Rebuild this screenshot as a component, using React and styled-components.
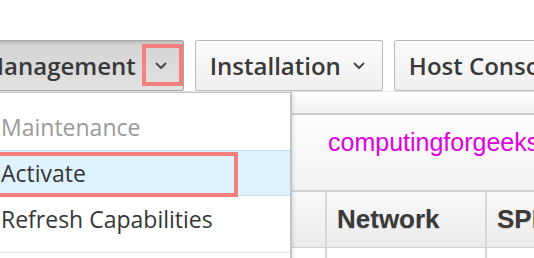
import React from 'react';
import styled, { createGlobalStyle } from 'styled-components';

const GlobalStyle = createGlobalStyle`
  html, body {
    margin: 0;
    padding: 0;
    background: #fff;
    overflow: hidden;
  }
  body {
    font-family: "Open Sans", "Liberation Sans", sans-serif;
    color: #363636;
  }
  *, *::before, *::after {
    box-sizing: border-box;
  }
`;

const Page = styled.div`
  margin-left: -33px;
  padding-top: 40px;
  width: 640px;
`;

const Toolbar = styled.div`
  position: relative;
  display: flex;
  gap: 11px;
  height: 51px;
`;

const ToolButton = styled.button`
  position: relative;
  display: flex;
  align-items: center;
  gap: ${p => (p.$active ? '19px' : '12px')};
  height: 51px;
  padding: 0 ${p => (p.$active ? '16px' : '17px')} 0 14px;
  border: 1px solid ${p => (p.$active ? '#a8a8a8' : '#bbbbbb')};
  border-radius: 2px;
  background: ${p =>
    p.$active
      ? 'linear-gradient(#d3d3d3, #e2e2e2)'
      : 'linear-gradient(#fbfbfb, #efefef)'};
  box-shadow: ${p => (p.$active ? 'inset 0 2px 3px rgba(0,0,0,0.12)' : 'none')};
  font-family: "Open Sans", sans-serif;
  font-size: 24px;
  font-weight: 600;
  color: #393939;
  white-space: nowrap;
  flex-shrink: 0;
`;

const Caret = styled.span`
  position: relative;
  display: inline-flex;
  align-items: center;
  justify-content: center;
  width: 12px;
  height: 12px;
`;

const Highlight = styled.span`
  position: absolute;
  border: 4px solid #f4807e;
  pointer-events: none;
`;

const CaretBox = styled(Highlight)`
  left: -13px;
  right: -16px;
  top: -16px;
  bottom: -14px;
`;

const Menu = styled.ul`
  position: absolute;
  left: 0;
  top: 52px;
  z-index: 5;
  width: 325px;
  height: 200px;
  margin: 0;
  padding: 11px 0 0;
  list-style: none;
  background: #fff;
  border: 1px solid #c4c4c4;
  border-right-width: 2px;
  box-shadow: 1px 2px 4px rgba(0,0,0,0.12);
`;

const MenuItem = styled.li`
  position: relative;
  display: flex;
  align-items: center;
  height: 46px;
  padding-left: 33px;
  font-size: 23px;
  color: ${p => (p.$disabled ? '#9a9a9a' : '#363636')};
  background: ${p => (p.$selected ? '#def3ff' : 'transparent')};
  border-top: 1px solid ${p => (p.$selected ? '#bde0f3' : 'transparent')};
  border-bottom: 1px solid ${p => (p.$selected ? '#bde0f3' : 'transparent')};
`;

const RowBox = styled(Highlight)`
  left: 20px;
  width: 250px;
  top: 1px;
  bottom: -2px;
`;

const Divider = styled.li`
  height: 1px;
  margin-top: 10px;
  background: #e3e3e3;
`;

const Panel = styled.div`
  display: flex;
  flex-direction: column;
`;

const TopStrip = styled.div`
  height: 24px;
  background: linear-gradient(#ffffff, #f1f1f1);
  border-top: 1px solid #e6e6e6;
  border-bottom: 2px solid #cdcdcd;
`;

const Header = styled.div`
  display: flex;
  align-items: center;
  height: 77px;
  padding-left: 361px;
  padding-bottom: 20px;
  background: linear-gradient(#fdfdfd, #f2f2f2);
  border-bottom: 2px solid #d2d2d2;
`;

const Brand = styled.span`
  font-family: "Liberation Sans", Arial, sans-serif;
  font-size: 25px;
  color: #e000e0;
`;

const TableRow = styled.div`
  display: grid;
  grid-template-columns: 360px 160px 1fr;
  height: ${p => (p.$head ? '56px' : '40px')};
  background: ${p => (p.$head ? 'linear-gradient(#f9f9f9, #ebebeb)' : '#fff')};
  border-bottom: 1px solid #d0d0d0;
`;

const Cell = styled.div`
  display: flex;
  align-items: center;
  padding-left: 10px;
  border-right: 2px solid #d6d6d6;
  font-family: "Liberation Sans", Arial, sans-serif;
  font-size: 26px;
  font-weight: 700;
  color: #3a3a3a;
  text-shadow: 0 1px 1px rgba(0,0,0,0.15);
  white-space: nowrap;
  overflow: hidden;
`;

const Chevron = () => (
  <svg width="12" height="8" viewBox="0 0 12 8">
    <polyline points="1.5,1.5 6,6 10.5,1.5" fill="none" stroke="#444" strokeWidth="1.8" strokeLinecap="round" strokeLinejoin="round" />
  </svg>
);

const App = () => {
  return (
    <>
      <GlobalStyle />
      <Page>
        <Toolbar>
          <ToolButton $active>
            Management
            <Caret>
              <Chevron />
              <CaretBox />
            </Caret>
          </ToolButton>
          <ToolButton>
            Installation
            <Caret>
              <Chevron />
            </Caret>
          </ToolButton>
          <ToolButton>Host Console</ToolButton>

          <Menu>
            <MenuItem $disabled>Maintenance</MenuItem>
            <MenuItem $selected>
              Activate
              <RowBox />
            </MenuItem>
            <MenuItem>Refresh Capabilities</MenuItem>
            <Divider />
          </Menu>
        </Toolbar>

        <Panel>
          <TopStrip />
          <Header>
            <Brand>computingforgeeks</Brand>
          </Header>
          <TableRow $head>
            <Cell />
            <Cell>Network</Cell>
            <Cell>SPM</Cell>
          </TableRow>
          <TableRow>
            <Cell />
            <Cell />
            <Cell />
          </TableRow>
        </Panel>
      </Page>
    </>
  );
};

export default App;
